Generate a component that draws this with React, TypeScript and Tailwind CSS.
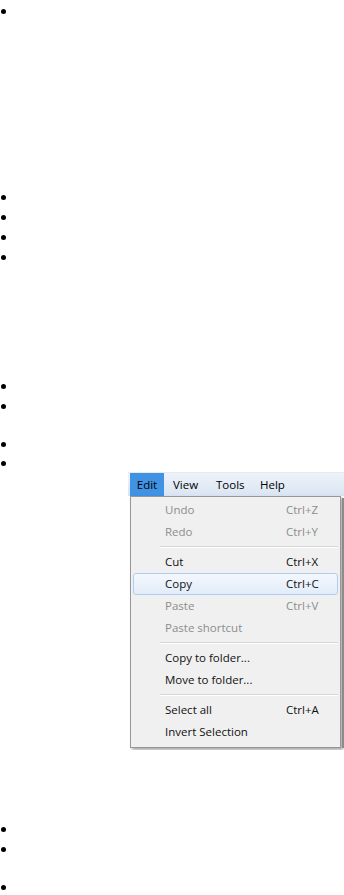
import React from 'react';

type Item = { label: string; shortcut?: string; disabled?: boolean; active?: boolean } | 'sep';

const items: Item[] = [
    { label: 'Undo', shortcut: 'Ctrl+Z', disabled: true },
    { label: 'Redo', shortcut: 'Ctrl+Y', disabled: true },
    'sep',
    { label: 'Cut', shortcut: 'Ctrl+X' },
    { label: 'Copy', shortcut: 'Ctrl+C', active: true },
    { label: 'Paste', shortcut: 'Ctrl+V', disabled: true },
    { label: 'Paste shortcut', disabled: true },
    'sep',
    { label: 'Copy to folder...' },
    { label: 'Move to folder...' },
    'sep',
    { label: 'Select all', shortcut: 'Ctrl+A' },
    { label: 'Invert Selection' },
];

function Bullet({ h = 'h-5' }: { h?: string }) {
    return (
        <div className={`flex items-center ${h}`}>
            <span className="ml-[1px] h-[5px] w-[5px] rounded-full bg-black" />
        </div>
    );
}

function MenuShot() {
    return (
        <div className="ml-[128px] h-[278px] w-[216px] overflow-hidden bg-white font-['Open_Sans',sans-serif] text-[11.5px]">
            <div className="h-[1px] bg-[#e6ebf2]" />
            <div className="flex h-[23px] items-stretch bg-gradient-to-b from-[#eef3fa] to-[#dae4f2] text-black">
                <div className="ml-[2px] flex w-[34px] items-center justify-center bg-[#3f92e4]">Edit</div>
                <div className="flex w-[43px] items-center pl-[9px]">View</div>
                <div className="flex w-[44px] items-center pl-[9px]">Tools</div>
                <div className="flex items-center pl-[9px]">Help</div>
            </div>
            <div className="flex">
                <div className="w-[2px]" />
                <div className="w-[211px] border border-[#979797] bg-[#f0f0f0] py-[2px] shadow-[2px_2px_3px_rgba(0,0,0,0.35)]">
                    {items.map((it, i) =>
                        it === 'sep' ? (
                            <div key={i} className="flex h-[8px] flex-col justify-center pl-[29px] pr-[2px]">
                                <div className="h-[1px] bg-[#d7d7d7]" />
                                <div className="h-[1px] bg-white" />
                            </div>
                        ) : (
                            <div
                                key={i}
                                className={`mx-[2px] flex h-[22px] items-center rounded-[3px] border pl-[31px] ${
                                    it.active
                                        ? 'border-[#aecdf2] bg-gradient-to-b from-[#f4f8fd] to-[#e2ecf9]'
                                        : 'border-transparent'
                                } ${it.disabled ? 'text-[#8d8d8d]' : 'text-[#111]'}`}
                            >
                                <span className="w-[121px] whitespace-nowrap">{it.label}</span>
                                {it.shortcut && <span>{it.shortcut}</span>}
                            </div>
                        )
                    )}
                </div>
                <div className="ml-[1px] mt-[2px] h-[250px] w-[2px] bg-[#8c8c8c]" />
            </div>
        </div>
    );
}

export default function App() {
    return (
        <div className="h-[895px] w-[344px] overflow-hidden bg-white pt-[1px]">
            <Bullet />
            <div className="mt-[166px]">
                <Bullet />
                <Bullet />
                <Bullet />
                <Bullet />
            </div>
            <div className="mt-[109px]">
                <Bullet />
                <Bullet />
            </div>
            <div className="mt-[18px]">
                <Bullet />
                <Bullet h="h-[18px]" />
            </div>
            <MenuShot />
            <div className="mt-[69px]">
                <Bullet />
                <Bullet />
            </div>
            <div className="mt-[18px]">
                <Bullet />
            </div>
        </div>
    );
}
